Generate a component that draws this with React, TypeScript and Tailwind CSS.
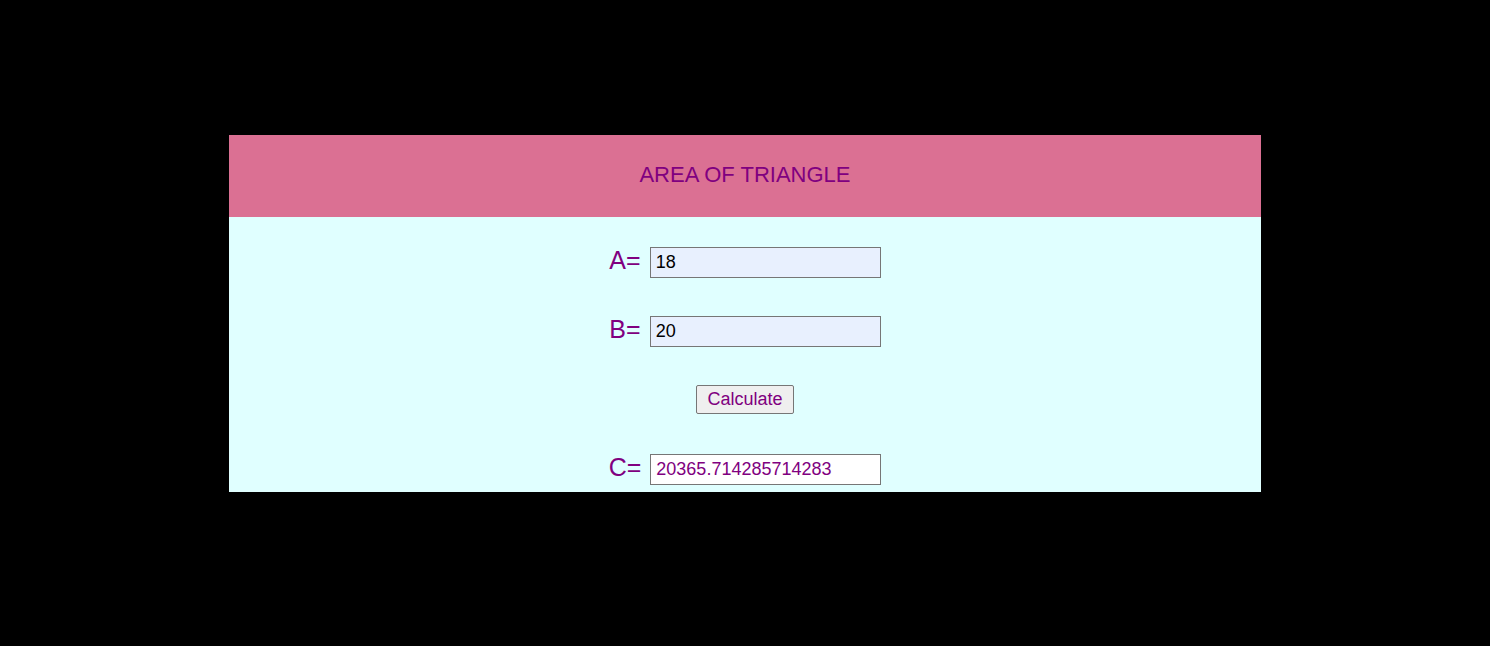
import React, { useState } from "react";

function Row({ label, value, tone }: { label: string; value: string; tone: "fill" | "out" }) {
  return (
    <div className="flex h-[69px] items-start justify-center">
      <div className="flex items-center gap-[9px]">
        <span className="mt-[-4px] text-[25px] leading-none text-[#800080]">{label}</span>
        <input
          readOnly
          value={value}
          className={
            tone === "fill"
              ? "h-[31px] w-[231px] border border-[#767676] bg-[#e8f0fe] px-[5px] text-[18px] text-black outline-none"
              : "h-[31px] w-[231px] border border-[#767676] bg-white px-[5px] text-[18px] text-[#800080] outline-none"
          }
        />
      </div>
    </div>
  );
}

export default function App() {
  const [a] = useState("18");
  const [b] = useState("20");

  return (
    <div className="h-[646px] w-full bg-black pt-[135px] font-['Liberation_Sans',Arial,sans-serif]">
      <div className="mx-[229px] h-[357px] overflow-hidden bg-[#e0ffff]">
        {/* header */}
        <div className="flex h-[82px] items-center justify-center bg-[#db7093] pb-[4px]">
          <h1 className="text-[22px] text-[#800080]">AREA OF TRIANGLE</h1>
        </div>

        <div className="pt-[30px]">
          <Row label="A=" value={a} tone="fill" />
          <Row label="B=" value={b} tone="fill" />
          <div className="flex h-[69px] items-start justify-center">
            <button
              type="button"
              className="h-[29px] rounded-[2px] border border-[#767676] bg-[#efefef] px-[10px] text-[18px] text-[#800080]"
            >
              Calculate
            </button>
          </div>
          <Row label="C=" value="20365.714285714283" tone="out" />
        </div>
      </div>
    </div>
  );
}
